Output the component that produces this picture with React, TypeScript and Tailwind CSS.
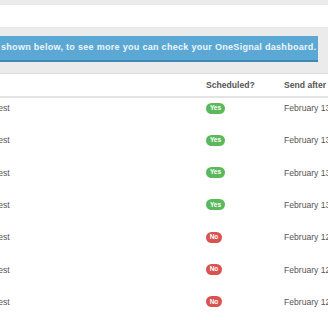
import React from 'react';

const rows = [
	{ title: 'Test', scheduled: true, sendAfter: 'February 13, 2019 10:00 am' },
	{ title: 'Test', scheduled: true, sendAfter: 'February 13, 2019 10:00 am' },
	{ title: 'Test', scheduled: true, sendAfter: 'February 13, 2019 10:00 am' },
	{ title: 'Test', scheduled: true, sendAfter: 'February 13, 2019 10:00 am' },
	{ title: 'Test', scheduled: false, sendAfter: 'February 12, 2019 4:30 pm' },
	{ title: 'Test', scheduled: false, sendAfter: 'February 12, 2019 4:30 pm' },
	{ title: 'Test', scheduled: false, sendAfter: 'February 12, 2019 4:30 pm' },
];

function Badge({ yes }: { yes: boolean }) {
	return yes ? (
		<span className="inline-flex h-[11px] w-[19px] items-center justify-center rounded-full bg-[#5cb85c] text-[6.5px] font-bold leading-none text-white">
			Yes
		</span>
	) : (
		<span className="inline-flex h-[11px] w-[16px] items-center justify-center rounded-full bg-[#d9534f] text-[6.5px] font-bold leading-none text-white">
			No
		</span>
	);
}

export default function App() {
	return (
		<div className="h-[320px] w-[328px] overflow-hidden bg-[#ebebeb] font-['Liberation_Sans',Arial,sans-serif]">
			<div className="mt-[5px] h-[22px] bg-white" />
			<div className="mt-[9px] mr-[10px] flex h-[26px] items-center overflow-hidden border-b-2 border-[#3f88b4] bg-[#5ba8d4] pb-px">
				<p className="whitespace-nowrap pl-px text-[9px] font-bold tracking-[0.3px] text-[#eef6fb]">
					shown below, to see more you can check your OneSignal dashboard.
				</p>
			</div>
			<div className="mt-[11px] h-[260px] border-t border-[#dcdcdc] bg-white text-[8.6px] text-[#555]">
				<div className="grid h-[24px] grid-cols-[206px_78px_1fr] items-center border-b-2 border-[#e3e3e3] font-bold">
					<div />
					<div>Scheduled?</div>
					<div className="whitespace-nowrap">Send after</div>
				</div>
				{rows.map((r, i) => (
					<div
						key={i}
						className="grid h-[32.33px] grid-cols-[206px_78px_1fr] items-start pt-[4px]"
					>
						<div className="-ml-[6px] whitespace-nowrap leading-[12px]">{r.title}</div>
						<div className="flex h-[12px] items-center">
							<Badge yes={r.scheduled} />
						</div>
						<div className="overflow-hidden whitespace-nowrap leading-[12px]">{r.sendAfter}</div>
					</div>
				))}
			</div>
		</div>
	);
}
